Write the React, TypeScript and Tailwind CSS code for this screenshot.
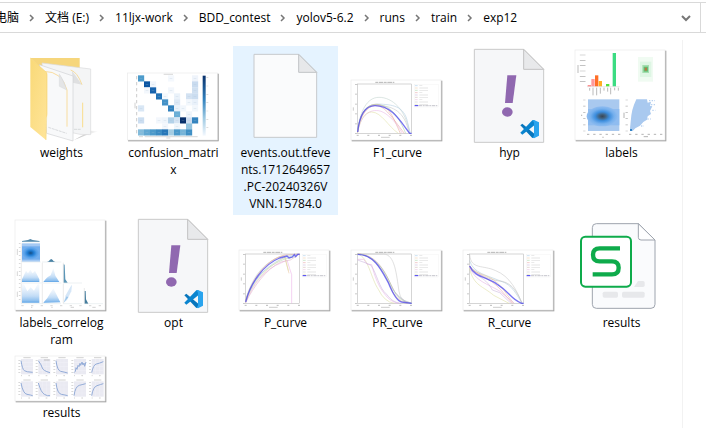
import type { ReactNode } from "react";

type FileItem = {
  lines: string[];
  icon: ReactNode;
  selected?: boolean;
};

const crumbs = ["文档 (E:)", "11ljx-work", "BDD_contest", "yolov5-6.2", "runs", "train", "exp12"];

/* Icons are drawn at three units per screen pixel. */
function Canvas({ box, children, short = false }: { box: string; children: ReactNode; short?: boolean }) {
  return (
    <svg viewBox={box} className={short ? "h-[51px] w-[105px]" : "h-[97px] w-[105px]"} aria-hidden="true">
      {children}
    </svg>
  );
}

function Card({ x, y, w, h }: { x: number; y: number; w: number; h: number }) {
  return (
    <rect
      x={x}
      y={y}
      width={w}
      height={h}
      fill="#fff"
      stroke="#e9e9e9"
      strokeWidth="2"
      className="drop-shadow-[3px_3px_2px_rgba(0,0,0,0.36)]"
    />
  );
}

function Folder() {
  return (
    <Canvas box="27 18 315 291">
      <defs>
        <linearGradient id="folder-front" x1="0" y1="0" x2="1" y2="1">
          <stop offset="0" stopColor="#f9d978" />
          <stop offset="1" stopColor="#ffe59a" />
        </linearGradient>
        <linearGradient id="folder-shade" x1="0" y1="0" x2="1" y2="0">
          <stop offset="0" stopColor="#bbb" />
          <stop offset="1" stopColor="#fff" />
        </linearGradient>
      </defs>
      <path d="M222 300L272 272L296 274L262 284Z" fill="url(#folder-shade)" />
      <path d="M91 54H239V90L140 100Z" fill="#f6d67c" />
      <path d="M126 69L272 87V284L240 283L140 262Z" fill="#f4f5f6" stroke="#d9dadb" strokeWidth="2" />
      <path d="M216 92L246 134L218 128Z" fill="#dfe0e1" />
      <path d="M212 90Q232 96 246 134" fill="none" stroke="#f6dda0" strokeWidth="3" />
      <path d="M248 188V262" stroke="#f9dd8c" strokeWidth="3" />
      <path d="M118 74L219 108V303L140 280Z" fill="#f8f9fa" stroke="#d0d2d4" strokeWidth="2" />
      <path d="M132 94Q186 94 201 150V260" fill="none" stroke="#f8dda0" strokeWidth="3" />
      <path d="M178 101Q184 140 200 149Q194 122 178 101Z" fill="#dadbdc" />
      <path d="M178 101V139L200 150" fill="#e4e5e6" stroke="#cfd0d1" strokeWidth="1" />
      <path d="M145 262L200 280M222 268H244" stroke="#c9cccf" strokeWidth="2" strokeDasharray="9 2" />
      <path d="M91 54L138 96Q142 98 142 104V222Q142 230 138 234V300L91 261Z" fill="url(#folder-front)" />
      <path d="M91 54L140 98V228L138 300" fill="none" stroke="#f6d67a" strokeWidth="2" />
    </Canvas>
  );
}

const confusion: [number, number, string][] = [
  [0, 0, "#4c9bcb"], [5, 0, "#f4f8fd"], [9, 0, "#eff4fb"],
  [1, 1, "#0a56a3"], [2, 1, "#f1f6fc"], [9, 1, "#c9dbef"],
  [1, 2, "#f3f7fc"], [2, 2, "#1763ad"], [5, 2, "#f3f7fc"], [9, 2, "#d0e0f1"],
  [3, 3, "#2272b6"], [4, 3, "#f5f9fd"], [6, 3, "#eaf2fa"], [8, 3, "#d3e2f2"], [9, 3, "#cbddf0"],
  [4, 4, "#4592c7"], [6, 4, "#dce8f5"], [8, 4, "#f2f7fc"], [9, 4, "#e9f1fa"],
  [0, 5, "#d9e7f5"], [5, 5, "#3282be"], [6, 5, "#eaf2fa"], [7, 5, "#f2f7fc"], [9, 5, "#f2f7fc"],
  [6, 6, "#6aaed6"], [8, 6, "#eff5fb"],
  [0, 7, "#ccdef1"], [3, 7, "#f3f7fc"], [4, 7, "#eff5fb"], [5, 7, "#b3d2e9"], [6, 7, "#d5e4f3"], [7, 7, "#08306b"], [8, 7, "#cfdef0"], [9, 7, "#3484bf"],
  [4, 8, "#f3f7fc"], [6, 8, "#f0f6fb"], [8, 8, "#94c4df"],
  [0, 9, "#82bbdb"], [1, 9, "#60a7d2"], [2, 9, "#4c9aca"], [3, 9, "#3c8cc3"], [4, 9, "#2777b8"], [5, 9, "#a5cde3"], [6, 9, "#4b99ca"], [7, 9, "#76b4d8"], [8, 9, "#4090c5"],
];

function ConfusionMatrix() {
  return (
    <Canvas box="18 18 315 291">
      <defs>
        <linearGradient id="blues" x1="0" y1="0" x2="0" y2="1">
          <stop offset="0" stopColor="#08306b" />
          <stop offset="0.4" stopColor="#3282be" />
          <stop offset="0.7" stopColor="#9dc9e2" />
          <stop offset="1" stopColor="#f3f8fe" />
        </linearGradient>
      </defs>
      <Card x={37} y={99} w={270} h={201} />
      {confusion.map(([c, r, fill]) => (
        <g key={`${c}-${r}`}>
          <rect x={69 + c * 18} y={106 + r * 18} width="18.5" height="18.5" fill={fill} />
          <path d={`M${74 + c * 18} ${115 + r * 18}h8`} stroke="#a9bfd3" strokeWidth="2" opacity="0.4" />
        </g>
      ))}
      <rect x="263" y="107" width="9" height="180" fill="url(#blues)" />
      <path d="M65 108V286" stroke="#ccc" strokeWidth="3" strokeDasharray="10 8" />
      <path d="M60 188V205" stroke="#d2d2d2" strokeWidth="3" />
      <path d="M146 103H174M72 290H84M89 290H248M154 294H166" stroke="#c6c6c6" strokeWidth="2" />
      <path d="M277 112V286" stroke="#d2d2d2" strokeWidth="6" strokeDasharray="2 23" />
    </Canvas>
  );
}

function BlankFile() {
  return (
    <Canvas box="15 18 315 291">
      <path d="M78 43H212L266 97V292H78Z" fill="#fafbfc" stroke="#c6c9cc" strokeWidth="3" />
      <path d="M212 43V97H266Z" fill="#e7e8ea" stroke="#c0c3c6" strokeWidth="3" />
    </Canvas>
  );
}

function YamlFile() {
  return (
    <Canvas box="6 18 315 291">
      <path d="M58 28H206L266 88V307H58Z" fill="#f6f7f9" stroke="#c9c9c9" strokeWidth="3" />
      <path d="M206 28V88H266Z" fill="#e8e9eb" stroke="#c2c2c2" strokeWidth="3" />
      <path d="M157 106H184L173 189H150Z" fill="#9068b0" />
      <ellipse cx="157" cy="216" rx="16" ry="14" fill="#9068b0" />
      <path d="M196 256L202 251L238 281V293L232 294Z" fill="#0876bd" />
      <path d="M196 278L232 241L238 240V256L202 284Z" fill="#0a84cf" />
      <path d="M237 240L252 247V287L237 295L232 292Q237 291 237 286V249Q237 244 232 242Z" fill="#2aa4ee" />
    </Canvas>
  );
}

type Curve = [path: string, color: string];

function CurveChart({ curves, main }: { curves: Curve[]; main: string }) {
  const legend = ["#9cc6e4", "#efc79f", "#9fd0a0", "#e59a9a", "#bfa8d8", "#c8b0aa", "#e8b6dc", "#c4c4c4", "#d9dc9c"];
  return (
    <Canvas box="-18 -102 315 291">
      <Card x={0} y={0} w={270} h={180} />
      <path d="M73 7H130" stroke="#b4b4b4" strokeWidth="3" strokeDasharray="8 2 14 2" />
      <rect x="20" y="12" width="162" height="148" fill="none" stroke="#ababab" strokeWidth="1.5" />
      <path d="M15 12V162" stroke="#aaa" strokeWidth="5" strokeDasharray="2 27.6" />
      <path d="M17 166H186" stroke="#bbb" strokeWidth="3" strokeDasharray="6 26" />
      <path d="M90 172H116M7 82V92" stroke="#b4b4b4" strokeWidth="2" />
      {curves.map(([d, stroke]) => (
        <path key={d} d={d} fill="none" stroke={stroke} strokeWidth="1.6" />
      ))}
      <path d={main} fill="none" stroke="#4a44ee" strokeOpacity="0.75" strokeWidth="4" />
      <rect x="190" y="13" width="73" height="68" fill="none" stroke="#eee" strokeWidth="1" />
      {legend.map((stroke, i) => (
        <g key={stroke}>
          <path d={`M192 ${17 + i * 7}h8`} stroke={stroke} strokeWidth="1.5" />
          <path d={`M205 ${17 + i * 7}h${i % 3 ? 26 : 9}`} stroke="#c8c8c8" strokeWidth="2" opacity="0.7" />
        </g>
      ))}
      <path d="M191 77H202" stroke="#3f38f0" strokeWidth="3" />
      <path d="M204 77H261" stroke="#a9a9b4" strokeWidth="2" strokeDasharray="10 2 5 2" />
    </Canvas>
  );
}

const f1: Curve[] = [
  ["M20 150C28 92 48 52 84 52C124 52 164 88 176 160", "#bccfca"],
  ["M20 154C26 98 46 72 82 72C122 74 160 76 170 128L178 160", "#aac8de"],
  ["M20 156C28 92 56 70 86 76C124 80 162 92 174 160", "#c1c1c1"],
  ["M20 156C26 98 48 72 78 73C116 78 126 112 148 160", "#e7a68f"],
  ["M20 156C28 100 54 74 78 77C102 80 122 110 160 160", "#e7a1a1"],
  ["M20 158C28 112 50 88 82 92C102 94 132 120 154 160", "#e7b1e4"],
  ["M20 158C26 120 42 96 62 96C92 97 112 140 142 160", "#dfdfa0"],
  ["M20 156C26 102 44 76 70 74C108 72 136 92 164 160", "#a9cda9"],
];
const precision: Curve[] = [
  ["M20 150C38 84 72 38 126 20L144 16L182 12", "#b4c8c4"],
  ["M20 156C38 100 72 54 124 28L148 20L182 12", "#a8cae4"],
  ["M20 152C34 98 78 34 122 20L136 17L150 70", "#e8c39a"],
  ["M20 158C42 102 76 58 128 38L144 30L152 56L158 74V160", "#eaaae5"],
  ["M20 158C42 112 84 54 126 36L154 30L182 12", "#dfafc5"],
  ["M20 154C38 88 78 32 136 15L182 12", "#e1abab"],
  ["M20 154C36 86 88 46 138 27L168 20", "#adcdb0"],
  ["M20 157C36 102 84 50 138 21L148 62", "#dcdb9d"],
];
const precisionRecall: Curve[] = [
  ["M20 12H98C132 14 136 72 144 124Q148 156 182 160", "#c4c4c4"],
  ["M20 12C72 12 98 56 120 104Q140 152 182 160", "#d59c9c"],
  ["M20 12C64 13 98 62 116 104Q132 154 170 160", "#e6b191"],
  ["M20 12C78 16 104 68 124 114Q144 158 182 160", "#9dc7a2"],
  ["M20 12C52 20 60 86 82 118Q100 156 130 160", "#d9dc9d"],
  ["M20 28H38L48 42L62 44C72 84 84 110 98 128Q118 158 144 160", "#e7abe4"],
  ["M20 30L42 38L60 46C78 72 84 114 106 132Q124 158 150 160", "#c6afdc"],
  ["M20 12C58 14 84 40 106 82Q132 148 182 160", "#b0ccdf"],
];
const recall: Curve[] = [
  ["M20 14C24 60 60 44 98 62C140 78 164 124 176 160", "#c4c4c4"],
  ["M20 32C30 70 74 76 112 93C150 104 162 138 178 160", "#a9c7d6"],
  ["M20 48C42 72 84 92 118 94C150 102 164 130 178 160", "#bbb"],
  ["M20 50C38 76 78 80 112 118L148 160", "#e6a2a2"],
  ["M20 48C34 78 78 66 114 110L152 160", "#e5bc94"],
  ["M20 52C34 92 78 104 108 122L154 160", "#e3abe1"],
  ["M20 56C32 108 60 108 92 136L138 160", "#dcdc9b"],
  ["M20 50C36 86 62 72 88 120L110 128L144 160", "#c6b0da"],
];

function LabelsPlot() {
  const bars: [number, number, string][] = [
    [68, 3, "#ff5a5a"], [79, 22, "#ff9a9a"], [90, 33, "#ff6f27"], [101, 16, "#ffae23"], [123, 7, "#52e23b"], [143, 100, "#3bdc82"],
  ];
  return (
    <Canvas box="12 18 315 291">
      <defs>
        <radialGradient id="density">
          <stop offset="0" stopColor="#384655" />
          <stop offset="0.2" stopColor="#42627f" />
          <stop offset="0.45" stopColor="#3c8ddd" />
          <stop offset="0.75" stopColor="#76b0ed" />
          <stop offset="1" stopColor="#8fbcf0" />
        </radialGradient>
      </defs>
      <Card x={30} y={30} w={270} h={270} />
      <path d="M53 44V139" stroke="#b0b0b0" strokeWidth="17" strokeDasharray="2 14" />
      <path d="M39 75V99" stroke="#bbb" strokeWidth="3" />
      {bars.map(([x, h, fill]) => (
        <rect key={x} x={x} y={139 - h} width="10" height={h} fill={fill} />
      ))}
      <path d="M66 140H164" stroke="#bbb" strokeWidth="1" />
      <path d="M74 144v8M84 143v23M95 143v23M106 143v18M117 143v9M128 143v12M137 143v20M149 143v8M160 143v9" stroke="#bbb" strokeWidth="3" />
      <rect x="219" y="51" width="45" height="74" fill="#f0fbf2" />
      <rect x="225" y="65" width="34" height="46" fill="#def6e4" />
      <rect x="232" y="75" width="20" height="24" fill="#a3deaf" />
      <rect x="236" y="80" width="13" height="15" fill="#5fbf74" />
      <rect x="239" y="83" width="7" height="9" fill="#b37b45" />
      <rect x="69" y="178" width="94" height="95" fill="#a9c9ef" />
      <rect x="69" y="207" width="94" height="49" fill="#8fbcf0" />
      <ellipse cx="112" cy="229" rx="47" ry="30" fill="url(#density)" />
      <path d="M195 273V266L197 246L199 226L202 210L207 194L214 178H246L248 188L258 185L255 198L262 199L255 213L258 222L248 229L246 239L235 246L225 257L211 265L203 273Z" fill="#a9c9ef" />
      <path d="M252 182h18M258 194h12M262 211h9M247 237h10M228 258h9" stroke="#b8d1f0" strokeWidth="4" strokeDasharray="4 4" />
      <path d="M195 273v-6h6v6Z" fill="#3484c5" />
      <path d="M58 179V274M185 179V274" stroke="#b4b4b4" strokeWidth="7" strokeDasharray="2 16.6" />
      <path d="M66 283H166M192 283H292" stroke="#b4b4b4" strokeWidth="3" strokeDasharray="7 11.6" />
      <path d="M50 224v4M114 290v4M236 290h13M177 218v16" stroke="#b4b4b4" strokeWidth="3" />
    </Canvas>
  );
}

function Correlogram() {
  return (
    <Canvas box="27 18 315 291">
      <defs>
        <radialGradient id="heat">
          <stop offset="0" stopColor="#174e83" />
          <stop offset="0.35" stopColor="#1d7ad0" />
          <stop offset="0.7" stopColor="#549fe8" />
          <stop offset="1" stopColor="#72aeee" />
        </radialGradient>
        <linearGradient id="fade-down" x1="0" y1="0" x2="0" y2="1">
          <stop offset="0" stopColor="#e3eefa" stopOpacity="0.3" />
          <stop offset="0.65" stopColor="#c0dbf6" />
          <stop offset="0.9" stopColor="#8dbfee" />
          <stop offset="1" stopColor="#5ba3e6" />
        </linearGradient>
      </defs>
      <Card x={45} y={30} w={270} h={270} />
      <path d="M66 93L84 90L91 87L98 90L118 93V95H66Z" fill="#568bad" />
      <path d="M66 95H120" stroke="#6a9db9" strokeWidth="1" />
      <rect x="66" y="100" width="54" height="55" fill="#a4c9f3" />
      <rect x="66" y="109" width="54" height="40" fill="#72aeee" />
      <ellipse cx="92" cy="129" rx="26" ry="19" fill="url(#heat)" />
      <path d="M141 156Q147 155 150 149L154 147L158 150Q160 154 166 156Z" fill="#4b83a5" />
      <path d="M66 216V208L78 182L84 190L91 179L98 190L105 182L118 208V216Z" fill="url(#fade-down)" />
      <path d="M130 216Q142 200 152 196L160 174L166 197L178 216Z" fill="url(#fade-down)" />
      <path d="M66 278V223H72L82 244L92 232L102 242L113 223H118V278Z" fill="url(#fade-down)" />
      <path d="M130 278Q144 264 151 249L160 235L167 249L181 277Z" fill="url(#fade-down)" />
      <path d="M191 278L197 256L211 231L216 224L214 244L201 270Z" fill="#d5e6f7" />
      <path d="M191 278L200 259L205 262Z" fill="#9cc6ea" />
      <path d="M191 218V163L194 164L196 208L203 218Z" fill="#5b96b7" />
      <path d="M254 281V243L257 243L258 268L265 281Z" fill="#457d9d" />
      <path d="M64 100V156M64 158V218M64 221V281M127 158V218M127 221V281M190 158V218M190 221V281M253 234V281" stroke="#c0c0c0" strokeWidth="1" />
      <path d="M64 156H122M126 156H184M64 219H184M190 219H246M64 281H183M190 281H246M252 281H309" stroke="#c9d3da" strokeWidth="1" />
      <path d="M59 99V279" stroke="#ccc" strokeWidth="5" strokeDasharray="2 10" />
      <path d="M52 117v18M52 184v14M52 245v16" stroke="#d6d6d6" strokeWidth="3" />
      <path d="M64 287H309" stroke="#c0c0c0" strokeWidth="2" strokeDasharray="7 22" />
      <path d="M93 292h4M154 292h4M212 292h10M277 292h10" stroke="#bbb" strokeWidth="2" />
    </Canvas>
  );
}

function Spreadsheet() {
  return (
    <Canvas box="342 3 315 291">
      <path d="M424 26H550L600 75V268Q600 280 588 280H424Q412 280 412 268V38Q412 26 424 26Z" fill="#fafbfd" stroke="#9ea4ae" strokeWidth="3" />
      <path d="M550 26V67Q550 75 558 75H600Z" fill="#fff" stroke="#9ea4ae" strokeWidth="3" strokeLinejoin="round" />
      <path d="M549 198H564Q569 198 569 203V211Q569 216 564 216H537Z" fill="#e7e8eb" />
      <rect x="443" y="230" width="46" height="18" rx="5" fill="#e7e8eb" />
      <rect x="501" y="230" width="68" height="18" rx="5" fill="#e7e8eb" />
      <rect x="378" y="65" width="150" height="150" rx="13" fill="#fff" stroke="#0eab4b" strokeWidth="6" />
      <path d="M495 100H434Q414 100 414 119Q414 139 434 139H471Q491 139 491 158Q491 178 471 178H413" fill="none" stroke="#0eab4b" strokeWidth="13" />
    </Canvas>
  );
}

function ResultsPlot() {
  const xs = [63, 115, 168, 222, 275];
  const noisy = "M0 36L4 32L6 21L9 26L12 14L15 18L18 8L20 14L24 4L27 13L30 7L32 17L36 4";
  const shapes = [
    ["M0 0Q4 26 10 30T35 35", "M0 0Q10 14 12 22T35 36", "M0 0Q4 30 14 32T35 37", noisy, "M0 36Q5 12 14 10T35 3"],
    ["M0 0Q6 32 18 34T35 38", "M0 0Q8 28 18 34T35 38", "M0 0Q4 32 16 34T35 38", "M0 38Q4 10 16 7T35 2", "M0 38Q4 12 16 8T35 2"],
  ];
  return (
    <Canvas box="27 21 315 153" short>
      <Card x={45} y={33} w={270} h={135} />
      {shapes.map((row, r) =>
        row.map((d, c) => (
          <g key={`${r}-${c}`} transform={`translate(${xs[c]} ${r ? 109 : 42})`}>
            <rect width="36" height="46" fill="#eaeaf2" />
            <path d="M12 0V46M24 0V46M0 11H36M0 23H36M0 35H36" stroke="#f7f7fb" />
            <path d="M-5 3V45" stroke="#ccc" strokeWidth="6" strokeDasharray="2 7" />
            <path d="M7 -4H29" stroke="#bbb" strokeWidth="2" />
            <path d="M0 50H3M22 50H27" stroke="#bbb" strokeWidth="2" />
            <path d={d} transform="translate(0 5)" fill="none" stroke="#93acd8" strokeWidth="3" />
          </g>
        )),
      )}
      <path d="M132 45h17" stroke="#aaa" strokeWidth="2" />
    </Canvas>
  );
}

const rows: FileItem[][] = [
  [
    { lines: ["weights"], icon: <Folder /> },
    { lines: ["confusion_matri", "x"], icon: <ConfusionMatrix /> },
    { lines: ["events.out.tfeve", "nts.1712649657", ".PC-20240326V", "VNN.15784.0"], icon: <BlankFile />, selected: true },
    { lines: ["F1_curve"], icon: <CurveChart curves={f1} main="M20 156C26 104 44 77 72 77C124 77 148 124 176 160H182" /> },
    { lines: ["hyp"], icon: <YamlFile /> },
    { lines: ["labels"], icon: <LabelsPlot /> },
  ],
  [
    { lines: ["labels_correlog", "ram"], icon: <Correlogram /> },
    { lines: ["opt"], icon: <YamlFile /> },
    { lines: ["P_curve"], icon: <CurveChart curves={precision} main="M20 156C34 98 76 42 122 24L144 18L150 24L160 21L166 14L170 20L176 13H182" /> },
    { lines: ["PR_curve"], icon: <CurveChart curves={precisionRecall} main="M20 13C68 14 88 54 112 98Q134 152 152 156L182 160" /> },
    { lines: ["R_curve"], icon: <CurveChart curves={recall} main="M20 48C34 82 76 82 104 104C142 128 142 146 176 160H182" /> },
    { lines: ["results"], icon: <Spreadsheet /> },
  ],
  [{ lines: ["results"], icon: <ResultsPlot /> }],
];

function FileTile({ lines, icon, selected }: FileItem) {
  return (
    <button
      type="button"
      className={`flex w-[105px] flex-col items-center gap-px pb-[3px] ${selected ? "bg-[#e5f3ff]" : ""}`}
    >
      {icon}
      <span className="text-xs leading-[17px]">
        {lines.map((line) => (
          <span key={line} className="block whitespace-nowrap">
            {line}
          </span>
        ))}
      </span>
    </button>
  );
}

function CrumbArrow() {
  return (
    <svg viewBox="0 0 26 12" className="h-3 w-[26px] shrink-0" aria-hidden="true">
      <path d="M11 3L14 6L11 9" fill="none" stroke="#777" strokeWidth="1.5" />
    </svg>
  );
}

export default function App() {
  return (
    <div className="min-h-screen overflow-hidden bg-white font-['Open_Sans','Noto_Sans_CJK_SC',sans-serif] text-black">
      <header className="flex pt-[2px]">
        <nav aria-label="Path" className="flex h-[31px] flex-1 items-center border-y border-r border-[#d9d9d9] pr-[7px] text-xs">
          <button type="button" className="-ml-[5px] whitespace-nowrap">电脑</button>
          {crumbs.map((name) => (
            <span key={name} className="flex items-center">
              <CrumbArrow />
              <button type="button" className="whitespace-nowrap">{name}</button>
            </span>
          ))}
          <button type="button" aria-label="Previous locations" className="ml-auto">
            <svg viewBox="0 0 14 14" className="size-[14px]" aria-hidden="true">
              <path d="M3 5L7 9L11 5" fill="none" stroke="#777" strokeWidth="2" />
            </svg>
          </button>
        </nav>
        <div className="w-[5px] border-y border-[#d9d9d9]" />
      </header>
      <div className="flex pt-[7px]">
        <main className="flex min-h-[388px] flex-1 flex-col gap-px border-r border-[#f2f2f2] pt-[6px] pl-[9px]">
          {rows.map((row, i) => (
            <div key={i} className="flex items-start gap-[7px]">
              {row.map((item, j) => (
                <FileTile key={j} {...item} />
              ))}
            </div>
          ))}
        </main>
        <aside className="w-[23px]" />
      </div>
    </div>
  );
}
